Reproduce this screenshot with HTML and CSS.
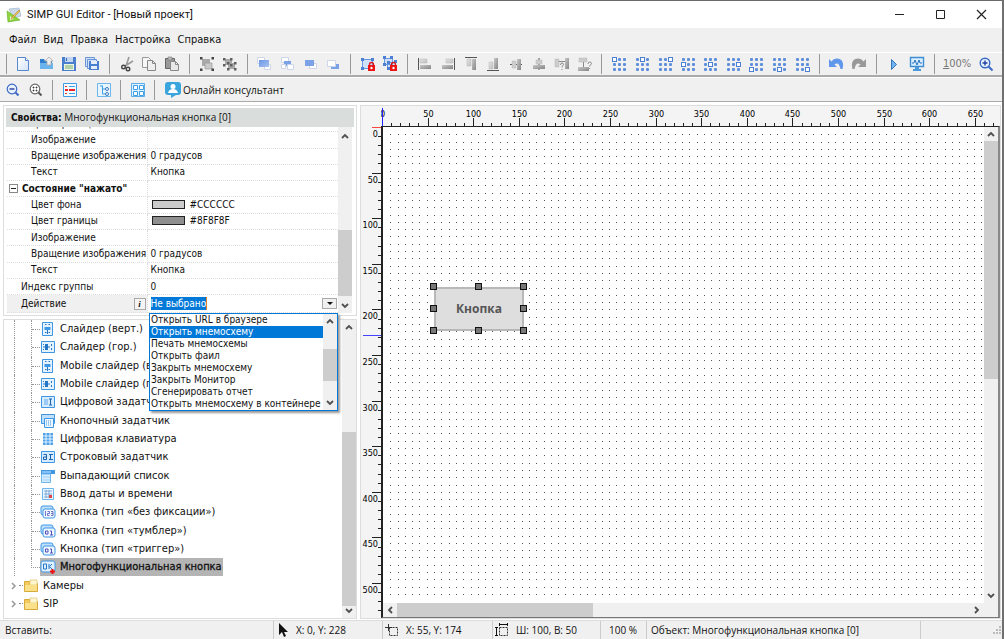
FILE: index.html
```html
<!DOCTYPE html>
<html lang="ru">
<head>
<meta charset="utf-8">
<title>SIMP GUI Editor - [Новый проект]</title>
<link rel="stylesheet" href="styles.css">
</head>
<body>
<svg class="defs" aria-hidden="true">
  <defs>
    <linearGradient id="gray" x1="0" y1="0" x2="1" y2="1"><stop offset="0" stop-color="#c8c8c8"/><stop offset="1" stop-color="#858585"/></linearGradient>
    <linearGradient id="light" x1="0" y1="0" x2="1" y2="1"><stop offset="0" stop-color="#e2e2e2"/><stop offset="1" stop-color="#c0c0c0"/></linearGradient>
    <linearGradient id="blue" x1="0" y1="0" x2="1" y2="1"><stop offset="0" stop-color="#6a95e4"/><stop offset="1" stop-color="#a9c3f2"/></linearGradient>
    <linearGradient id="pale" x1="0" y1="0" x2="1" y2="1"><stop offset="0" stop-color="#fff"/><stop offset="1" stop-color="#d3e2f8"/></linearGradient>
  </defs>
  <symbol id="logo" viewBox="0 0 16 16"><path d="M3 2l10-1 2 8-8 2z" fill="#c9d9ea" stroke="#a3b8cc" stroke-width=".7"/><path d="M1 4l13 9-12 2z" fill="#8ed43c" stroke="#6fb52f" stroke-width=".7"/><path d="M4 9l4 3-4 1z" fill="#eaf8d8"/><path d="M13 3L6 10l-1 2 2-1 7-7z" fill="#f3c44c" stroke="#a07a2c" stroke-width=".5"/></symbol>
  <symbol id="new" viewBox="0 0 16 16"><path d="M2.500 1.500h8l3 3v10h-11z" fill="url(#pale)" stroke="#5588cf"/><path d="M10.500 1.500v3h3" fill="#fff" stroke="#5588cf"/></symbol>
  <symbol id="open" viewBox="0 0 16 16"><path d="M2 3h4l1 2h7v4H2z" fill="#2f7fcc"/><path d="M2 7h13v6H2z" fill="#6ab4ee"/><path d="M11 1l4 4h-2v4H9V5H7z" fill="#eee" stroke="#aaa" stroke-width=".8"/></symbol>
  <symbol id="save" viewBox="0 0 16 16"><path d="M1 1h14v14H1z" fill="#4a7fd0"/><path d="M4 1h8v5H4z" fill="#c3d7f2"/><path d="M3 8h10v6H3z" fill="#eef4e4"/><path d="M4 10h8M4 12h8" stroke="#74b06c"/><path d="M5 2h1v3H5z" fill="#3467b5"/></symbol>
  <symbol id="saveall" viewBox="0 0 16 16"><path d="M1.500 1.500h9v9h-9z" fill="#cfe0f7" stroke="#6a95d8"/><path d="M3.500 3.500h9v9h-9z" fill="#cfe0f7" stroke="#6a95d8"/><path d="M5 5h10v9H5z" fill="#4a7fd0"/><path d="M7 5h6v3H7zM7 10h6v3H7z" fill="#e6eefb"/></symbol>
  <symbol id="cut" viewBox="0 0 16 16"><path d="M10 1L7 10M14 5L6 10" stroke="#999" stroke-width="1.600"/><circle cx="4.500" cy="11" r="1.800" fill="none" stroke="#444" stroke-width="1.400"/><circle cx="9" cy="13" r="1.800" fill="none" stroke="#444" stroke-width="1.400"/></symbol>
  <symbol id="copy" viewBox="0 0 16 16"><path d="M1.500 1.500h6l2 2v8h-8z" fill="#f6f6f6" stroke="#999"/><path d="M6.500 4.500h5l3 3v7h-8z" fill="#eee" stroke="#888"/><path d="M11.500 4.500v3h3" fill="none" stroke="#888"/></symbol>
  <symbol id="paste" viewBox="0 0 16 16"><path d="M1.500 2.500h9v10h-9z" fill="#999" stroke="#666"/><path d="M4 1h4v3H4z" fill="#bbb" stroke="#777" stroke-width=".6"/><path d="M6.500 5.500h5l3 3v6h-8z" fill="#e8e8e8" stroke="#888"/><path d="M11.500 5.500v3h3" fill="none" stroke="#888"/></symbol>
  <symbol id="group" viewBox="0 0 16 16"><path d="M3 3h8v7H3z" fill="#aaa"/><path d="M6 7h7v6H6z" fill="#c9c9c9" stroke="#999" stroke-width=".7"/><path d="M1 1h2.500v2.500H1zM12.500 1H15v2.500h-2.500zM1 12.500h2.500V15H1zM12.500 12.500H15V15h-2.500z" fill="#444"/></symbol>
  <symbol id="ungroup" viewBox="0 0 16 16"><path d="M3 3h7v6H3zM6 7h7v6H6z" fill="#aaa"/><path d="M1 2h2.500v2.500H1zM8 2h2.500v2.500H8zM1 8h2.500v2.500H1zM5 6h2.500v2.500H5zM12 6h2.500v2.500H12zM8 8h2.500v2.500H8zM5 12h2.500v2.500H5zM12 12h2.500v2.500H12z" fill="#606060"/></symbol>
  <symbol id="front" viewBox="0 0 16 16"><path d="M1.500 1.500h7v6h-7zM8.500 8.500h6v5h-6z" fill="#fff" stroke="#ccd6e8"/><path d="M3 4h10v7H3z" fill="url(#blue)"/></symbol>
  <symbol id="forward" viewBox="0 0 16 16"><path d="M2.500 1.500h7v5h-7z" fill="#fff" stroke="#ccd6e8"/><path d="M5 5h7v5H5z" fill="#7ba1e6"/><path d="M8.500 8.500h6v5h-6zM2.500 8.500h4v4h-4z" fill="#fff" stroke="#ccd6e8"/></symbol>
  <symbol id="backward" viewBox="0 0 16 16"><path d="M7.500 7.500h7v5h-7z" fill="#fff" stroke="#ccd6e8"/><path d="M3 4h9v6H3z" fill="#7ba1e6"/></symbol>
  <symbol id="back" viewBox="0 0 16 16"><path d="M6 8h8v5H6z" fill="#7ba1e6"/><path d="M2.500 4.500h8v6h-8z" fill="#fff" stroke="#ccd6e8"/></symbol>
  <symbol id="padlock" viewBox="0 0 16 16"><path d="M9.500 10V8.500a2 2 0 0 1 4 0V10" fill="none" stroke="#d81818" stroke-width="1.300"/><path d="M8 9h7v6H8z" fill="#ec1313"/><circle cx="11.500" cy="12" r="1.200" fill="#fff"/></symbol>
  <symbol id="lock" viewBox="0 0 16 16"><path d="M2.500 3.500h10v9h-10z" fill="#cfe0fa" stroke="#6a98e0"/><path d="M1 2h3v3H1zM11 2h3v3h-3zM1 11h3v3H1z" fill="#4d7fd2"/><use href="#padlock"/></symbol>
  <symbol id="lockall" viewBox="0 0 16 16"><path d="M2.500 2.500h8v6h-8zM5.500 6.500h8v6h-8z" fill="#cfe0fa" stroke="#6a98e0"/><path d="M1 0h3v3H1zM8 0h3v3H8zM1 7h3v3H1zM5 5h3v3H5zM12 4h3v3h-3zM5 11h3v3H5z" fill="#4d7fd2"/><use href="#padlock"/></symbol>
  <symbol id="al1" viewBox="0 0 16 16"><path d="M1.500 2v12" stroke="#555"/><path d="M3 3h7v4H3z" fill="url(#light)" stroke="#bbb" stroke-width=".5"/><path d="M3 9h11v4H3z" fill="url(#gray)"/></symbol>
  <symbol id="al2" viewBox="0 0 16 16"><path d="M14.500 2v12" stroke="#555"/><path d="M6 3h7v4H6z" fill="url(#light)" stroke="#bbb" stroke-width=".5"/><path d="M2 9h11v4H2z" fill="url(#gray)"/></symbol>
  <symbol id="al3" viewBox="0 0 16 16"><path d="M2 1.500h12" stroke="#555"/><path d="M4 3h4v7H4z" fill="url(#light)" stroke="#bbb" stroke-width=".5"/><path d="M9 3h4v11H9z" fill="url(#gray)"/></symbol>
  <symbol id="al4" viewBox="0 0 16 16"><path d="M2 14.500h12" stroke="#555"/><path d="M4 6h4v7H4z" fill="url(#light)" stroke="#bbb" stroke-width=".5"/><path d="M9 2h4v11H9z" fill="url(#gray)"/></symbol>
  <symbol id="al5" viewBox="0 0 16 16"><path d="M2 8.500h12" stroke="#555"/><path d="M4 5h4v7H4z" fill="#ccc" stroke="#bbb" stroke-width=".5"/><path d="M9 3h4v11H9z" fill="url(#gray)"/></symbol>
  <symbol id="al6" viewBox="0 0 16 16"><path d="M8 2v12" stroke="#555"/><path d="M5 4h6v4H5z" fill="#ccc" stroke="#bbb" stroke-width=".5"/><path d="M2 9h12v4H2z" fill="url(#gray)"/></symbol>
  <symbol id="al7" viewBox="0 0 16 16"><path d="M1 3h4v8H1z" fill="#ccc" stroke="#bbb" stroke-width=".5"/><path d="M11 2h4v11h-4z" fill="url(#gray)"/><path d="M5 5.500h6M6.500 9q0-2 1.500-2t1.500 1.500q0 1-1.500 2v1M8 13v1" fill="none" stroke="#888"/></symbol>
  <symbol id="al8" viewBox="0 0 16 16"><path d="M2 2h8v4H2z" fill="#ccc" stroke="#bbb" stroke-width=".5"/><path d="M1 11h11v4H1z" fill="url(#gray)"/><path d="M6.500 6v5M11 8q0-2 1.700-2t1.800 1.500q0 1-1.800 2v1M12.700 12v1" fill="none" stroke="#888"/></symbol>
  <symbol id="undo" viewBox="0 0 16 16"><path d="M1 3v8h8L6.500 8.500Q11 5 12.500 13h2Q17 3 9 2.500 5.500 2.500 3.500 5.500z" fill="#5f97ea"/></symbol>
  <symbol id="redo" viewBox="0 0 16 16"><path d="M15 3v8H7l2.500-2.500Q5 5 3.500 13h-2Q-1 3 7 2.500q3.500 0 5.500 3z" fill="#999"/></symbol>
  <symbol id="play" viewBox="0 0 16 16"><path d="M5.500 3.500v10l5-5z" fill="#6fb4ee" stroke="#3474bd"/></symbol>
  <symbol id="monitor" viewBox="0 0 16 16"><path d="M1.500 1.500h13v9h-13z" fill="#d9efff" stroke="#3f8ed4" stroke-width="1.400"/><path d="M3 7h2l1-3 2 5 2-5 1 3h2" fill="none" stroke="#2c73b8"/><path d="M6 11h4v2h2v2H4v-2h2z" fill="#4b9ade"/></symbol>
  <symbol id="zoomin" viewBox="0 0 16 16"><circle cx="7" cy="7" r="4.800" fill="#e6f0ff" stroke="#3a68c4" stroke-width="1.400"/><path d="M4.500 7h5M7 4.500v5" stroke="#23409a" stroke-width="1.400"/><path d="M10.500 10.500l4 4" stroke="#3a68c4" stroke-width="2"/></symbol>
  <symbol id="zoomout" viewBox="0 0 16 16"><circle cx="7" cy="7" r="4.800" fill="#e6f0ff" stroke="#3a68c4" stroke-width="1.200"/><path d="M4.500 7h5" stroke="#23409a" stroke-width="1.400"/><path d="M10.500 10.500l3 3" stroke="#3a68c4" stroke-width="2"/></symbol>
  <symbol id="fit" viewBox="0 0 16 16"><circle cx="7" cy="7" r="4.800" fill="#fff" stroke="#666" stroke-width="1.200"/><path d="M5 5h1v1H5zM8 5h1v1H8zM5 8h1v1H5zM8 8h1v1H8z" fill="#333" stroke="#333" stroke-width=".7"/><path d="M10.500 10.500l3 3" stroke="#555" stroke-width="2"/></symbol>
  <symbol id="props" viewBox="0 0 16 16"><path d="M1.500 1.500h13v13h-13z" fill="#f4fbff" stroke="#3d9ee5"/><path d="M7 4.500h6M7 11.500h6" stroke="#3d9ee5"/><path d="M3 4.500h2M3 11.500h2" stroke="#d33"/><path d="M3 8h3M7 8h6" stroke="#e22" stroke-width="2"/></symbol>
  <symbol id="treeicon" viewBox="0 0 16 16"><path d="M1.500 1.500h13v13h-13z" fill="#e8f5ff" stroke="#6db7ee"/><path d="M4 4h3M6.500 4v8M6.500 7h3M6.500 12h3" stroke="#3d9ee5" fill="none"/><circle cx="11" cy="7" r="1.500" fill="#fff" stroke="#3278c0"/><circle cx="11" cy="12" r="1.500" fill="#fff" stroke="#3278c0"/></symbol>
  <symbol id="tiles" viewBox="0 0 16 16"><path d="M1.500 1.500h13v13h-13z" fill="#e3f3ff" stroke="#5badec"/><path d="M3.500 3.500h4v4h-4zM9.500 3.500h4v4h-4zM3.500 9.500h4v4h-4zM9.500 9.500h4v4h-4z" fill="#fff" stroke="#3d9ee5"/></symbol>
  <symbol id="chat" viewBox="0 0 16 16"><path d="M3 0h10q3 0 3 3v7q0 3-3 3h-2l-5 3v-3H3q-3 0-3-3V3q0-3 3-3z" fill="#3aa5dc"/><circle cx="8" cy="4.500" r="2.500" fill="#fff"/><path d="M3 11q1-4 5-4t5 4z" fill="#fff"/></symbol>
  <symbol id="sv" viewBox="0 0 16 16"><path d="M2.500 1.500h10v13h-10z" fill="#e4f3ff" stroke="#3f97e4"/><path d="M4.500 6h6v3h-6z" fill="#3f97e4"/><path d="M7.500 9v4M5 3.500h1.500M8.500 3.500H10M5 11.500h1.500M8.500 11.500H10" stroke="#2477c4"/></symbol>
  <symbol id="sh" viewBox="0 0 16 16"><path d="M1.500 2.500h13v11h-13z" fill="#e4f3ff" stroke="#3f97e4"/><path d="M5 5h3v6H5z" fill="#2477c4"/><path d="M3 8h7M11.500 5v2M11.500 9v2M3.500 5v1M3.500 10v1" stroke="#2477c4"/></symbol>
  <symbol id="num" viewBox="0 0 16 16"><path d="M1.500 2.500h13v11h-13z" fill="#d5ebff" stroke="#3f97e4"/><path d="M4 5h4v6H4z" fill="#9bcaf5"/><path d="M10.500 5v6M9 5h3M9 11h3" stroke="#1c62ac"/></symbol>
  <symbol id="btns" viewBox="0 0 16 16"><path d="M1.500 1.500h13v9h-13z" fill="#bfe0fc" stroke="#3f97e4"/><path d="M4.500 5.500h9v9h-9z" fill="#eef7ff" stroke="#3f97e4"/><path d="M6 8h6M6 10h6M6 12h6" stroke="#3f97e4" stroke-dasharray="1 1"/></symbol>
  <symbol id="keys" viewBox="0 0 16 16"><path d="M3 2h10v12H3z" fill="#4a9fea"/><path d="M3 5h10M3 8h10M3 11h10M6 2v12M10 2v12" stroke="#e4f3ff"/></symbol>
  <symbol id="str" viewBox="0 0 16 16"><path d="M1.500 2.500h13v11h-13z" fill="#d5ebff" stroke="#3f97e4"/><path d="M3.500 5.500h3v5h-3V8h3M10.500 5v6M9 5.500h4M9 10.500h4" fill="none" stroke="#1c62ac"/></symbol>
  <symbol id="list" viewBox="0 0 16 16"><path d="M1 2h14v4H1z" fill="#3f97e4"/><path d="M1.500 6h9v8.500h-9z" fill="#d5ebff" stroke="#6db7ee"/><path d="M2 4h9" stroke="#cde7ff"/><path d="M3 9h7M3 12h7" stroke="#9fd0f6"/></symbol>
  <symbol id="date" viewBox="0 0 16 16"><path d="M2.500 2.500h11v11h-11z" fill="#eaf5ff" stroke="#6db7ee"/><path d="M4 5h8M4 8h8M4 11h8M6 4v8M9 4v8" stroke="#6f9dcc" stroke-width=".8"/><path d="M9 9h3v3H9z" fill="#d44"/></symbol>
  <symbol id="b123" viewBox="0 0 16 16"><rect x="1" y="2" width="12" height="9" rx="2" fill="#bfe0fc" stroke="#3f97e4"/><rect x="3" y="5" width="12" height="9" rx="2" fill="#eef7ff" stroke="#3f97e4"/><path d="M5.500 7v5M7.500 7.500h2v2h-2v2h2M11 7.500h2v4h-2M11 9.500h2" fill="none" stroke="#5050b4" stroke-width=".8"/></symbol>
  <symbol id="b01" viewBox="0 0 16 16"><rect x="1" y="2" width="12" height="9" rx="2" fill="#bfe0fc" stroke="#3f97e4"/><rect x="3" y="5" width="12" height="9" rx="2" fill="#eef7ff" stroke="#3f97e4"/><path d="M5.500 8h2.500v3H5.500zM10 8h1.500v4M10 12h3" fill="none" stroke="#5050b4"/></symbol>
  <symbol id="ok" viewBox="0 0 16 16"><rect x="1" y="2" width="14" height="11" rx="2" fill="#dff0ff" stroke="#3f97e4"/><path d="M3.500 5h3v5h-3zM9 5v5M12 5L9.500 7.500 12 10" fill="none" stroke="#2477c4"/><path d="M10 12.500h5M12.500 10v5" stroke="#f01010" stroke-width="2"/></symbol>
  <symbol id="folder" viewBox="0 0 16 16"><path d="M1.500 3.500h5l1 2h7v8h-13z" fill="#f2c95a" stroke="#d9a93a"/><path d="M7 2h7v5H7z" fill="#fff6d0" stroke="#d9b95a" stroke-width=".6"/><path d="M2 7h12v6H2z" fill="#fbe08a"/></symbol>
  <symbol id="up" viewBox="0 0 10 10"><path d="M2 7l3-3 3 3" fill="none" stroke="#505050" stroke-width="1.800"/></symbol>
  <symbol id="down" viewBox="0 0 10 10"><path d="M2 3l3 3 3-3" fill="none" stroke="#505050" stroke-width="1.800"/></symbol>
  <symbol id="left" viewBox="0 0 10 10"><path d="M7 2L4 5l3 3" fill="none" stroke="#505050" stroke-width="1.800"/></symbol>
  <symbol id="right" viewBox="0 0 10 10"><path d="M3 2l3 3-3 3" fill="none" stroke="#505050" stroke-width="1.800"/></symbol>
  <symbol id="expand" viewBox="0 0 10 10"><path d="M3 2l3 3-3 3" fill="none" stroke="#999" stroke-width="1.500"/></symbol>
</svg>

<header class="titlebar">
  <svg class="icon"><use href="#logo"/></svg>
  <h1>SIMP GUI Editor - [Новый проект]</h1>
  <div class="winbtns">
    <button aria-label="Свернуть"><svg viewBox="0 0 11 11"><path d="M1 5.500h9" stroke="#222"/></svg></button>
    <button aria-label="Развернуть"><svg viewBox="0 0 11 11"><path d="M1.500 1.500h8v8h-8z" fill="none" stroke="#222"/></svg></button>
    <button aria-label="Закрыть"><svg viewBox="0 0 11 11"><path d="M1 1l9 9M10 1l-9 9" stroke="#222" stroke-width="1.200"/></svg></button>
  </div>
</header>
<nav class="menu"><button>Файл</button><button>Вид</button><button>Правка</button><button>Настройка</button><button>Справка</button></nav>
<div class="toolbar main-tools" role="toolbar" data-icons="| new open save saveall | cut copy paste | group ungroup | front forward backward back | lock lockall | al1 al2 al3 al4 al5 al6 al7 al8 | g0 g1 g2 g3 g4 g5 g6 g7 g8 | undo redo | play monitor | % zoomin"></div>
<div class="toolbar view-tools" role="toolbar" data-icons="zoomout fit | props | treeicon | tiles | chat"></div>

<main>
  <aside>
    <section class="panel props">
      <h2><b>Свойства:</b> Многофункциональная кнопка [0]</h2>
      <div class="props-body">
        <div class="grid-clip">
          <table>
            <tr><th>Цвет границы</th><td></td></tr>
            <tr><th>Изображение</th><td></td></tr>
            <tr><th>Вращение изображения</th><td>0 градусов</td></tr>
            <tr><th>Текст</th><td>Кнопка</td></tr>
            <tr class="head"><th><i class="minus"></i>Состояние "нажато"</th><td></td></tr>
            <tr><th>Цвет фона</th><td><i class="swatch light"></i>#CCCCCC</td></tr>
            <tr><th>Цвет границы</th><td><i class="swatch dark"></i>#8F8F8F</td></tr>
            <tr><th>Изображение</th><td></td></tr>
            <tr><th>Вращение изображения</th><td>0 градусов</td></tr>
            <tr><th>Текст</th><td>Кнопка</td></tr>
            <tr class="root"><th>Индекс группы</th><td>0</td></tr>
            <tr class="root active"><th><div class="cell"><label for="action">Действие</label><button class="info">i</button></div></th><td><div class="cell"><input id="action" value="Не выбрано" readonly><button class="drop" aria-label="Открыть список"></button></div></td></tr>
          </table>
        </div>
        <div class="vbar props-bar"><svg><use href="#up"/></svg><i class="thumb"></i><svg><use href="#down"/></svg></div>
      </div>
      <div class="popup">
        <ul role="listbox">
          <li role="option">Открыть URL в браузере</li>
          <li role="option" aria-selected="true" class="sel">Открыть мнемосхему</li>
          <li role="option">Печать мнемосхемы</li>
          <li role="option">Открыть фаил</li>
          <li role="option">Закрыть мнемосхему</li>
          <li role="option">Закрыть Монитор</li>
          <li role="option">Сгенерировать отчет</li>
          <li role="option">Открыть мнемосхему в контейнере</li>
        </ul>
        <div class="vbar popup-bar"><svg><use href="#up"/></svg><i class="thumb"></i><svg><use href="#down"/></svg></div>
      </div>
    </section>
    <section class="panel tree">
      <ul>
        <li><span class="trunk"></span><span class="branch"></span><svg class="icon"><use href="#sv"/></svg>Слайдер (верт.)</li>
        <li><span class="trunk"></span><span class="branch"></span><svg class="icon"><use href="#sh"/></svg>Слайдер (гор.)</li>
        <li><span class="trunk"></span><span class="branch"></span><svg class="icon"><use href="#sv"/></svg>Mobile слайдер (верт.)</li>
        <li><span class="trunk"></span><span class="branch"></span><svg class="icon"><use href="#sh"/></svg>Mobile слайдер (гор.)</li>
        <li><span class="trunk"></span><span class="branch"></span><svg class="icon"><use href="#num"/></svg>Цифровой задатчик</li>
        <li><span class="trunk"></span><span class="branch"></span><svg class="icon"><use href="#btns"/></svg>Кнопочный задатчик</li>
        <li><span class="trunk"></span><span class="branch"></span><svg class="icon"><use href="#keys"/></svg>Цифровая клавиатура</li>
        <li><span class="trunk"></span><span class="branch"></span><svg class="icon"><use href="#str"/></svg>Строковый задатчик</li>
        <li><span class="trunk"></span><span class="branch"></span><svg class="icon"><use href="#list"/></svg>Выпадающий список</li>
        <li><span class="trunk"></span><span class="branch"></span><svg class="icon"><use href="#date"/></svg>Ввод даты и времени</li>
        <li><span class="trunk"></span><span class="branch"></span><svg class="icon"><use href="#b123"/></svg>Кнопка (тип «без фиксации»)</li>
        <li><span class="trunk"></span><span class="branch"></span><svg class="icon"><use href="#b01"/></svg>Кнопка (тип «тумблер»)</li>
        <li><span class="trunk"></span><span class="branch"></span><svg class="icon"><use href="#b01"/></svg>Кнопка (тип «триггер»)</li>
        <li><span class="trunk"></span><span class="branch last"></span><span class="chosen"><svg class="icon"><use href="#ok"/></svg>Многофункциональная кнопка</span></li>
        <li class="top"><svg class="chev"><use href="#expand"/></svg><span class="stub"></span><svg class="icon"><use href="#folder"/></svg>Камеры</li>
        <li class="top"><svg class="chev"><use href="#expand"/></svg><span class="stub"></span><svg class="icon"><use href="#folder"/></svg>SIP</li>
      </ul>
      <div class="vbar tree-bar"><svg><use href="#up"/></svg><i class="thumb"></i><svg><use href="#down"/></svg></div>
    </section>
  </aside>

  <section class="workspace">
    <svg class="ruler-x" id="rx"></svg>
    <svg class="ruler-y" id="ry"></svg>
    <div class="view">
      <div class="canvas">
        <svg class="dots" id="dots"></svg>
        <button class="node">Кнопка<i class="h nw"></i><i class="h n"></i><i class="h ne"></i><i class="h w"></i><i class="h e"></i><i class="h sw"></i><i class="h s"></i><i class="h se"></i></button>
      </div>
      <div class="vbar view-v"><svg><use href="#up"/></svg><i class="thumb"></i><svg><use href="#down"/></svg></div>
      <div class="hbar"><svg><use href="#left"/></svg><i class="thumb"></i><svg><use href="#right"/></svg></div>
      <div class="corner"></div>
    </div>
  </section>
</main>

<footer>
  <span class="s1">Вставить:</span>
  <span class="s2"><svg class="icon" viewBox="0 0 16 16"><path d="M5 1v12l3-3 2 5 2-1-2-4h4z" fill="#111"/></svg>X: 0, Y: 228</span>
  <span class="s3"><svg class="icon" viewBox="0 0 16 16"><path d="M1 5.500h7M4.500 2v7" stroke="#333"/><path d="M5.500 5.500h8v8h-8z" fill="none" stroke="#333" stroke-dasharray="2 1"/></svg>X: 55, Y: 174</span>
  <span class="s4"><svg class="icon" viewBox="0 0 16 16"><path d="M5.500 5.500h8v8h-8z" fill="none" stroke="#333" stroke-dasharray="2 1"/><path d="M5 2.500h9M5.500 1v3M13.500 1v3M2.500 5v9M1 5.500h3M1 13.500h3" stroke="#111"/></svg>Ш: 100, В: 50</span>
  <span class="s5">100 %</span>
  <span class="s6">Объект: Многофункциональная кнопка [0]</span>
  <svg class="grip" viewBox="0 0 10 10"><path d="M7 1h2v2H7zM4 4h2v2H4zM7 4h2v2H7zM1 7h2v2H1zM4 7h2v2H4zM7 7h2v2H7z" fill="#bbb"/></svg>
</footer>
<script src="app.js"></script>
</body>
</html>
```
FILE: styles.css
```css
* { box-sizing: border-box; }
body {
  margin: 0;
  height: 100vh;
  display: flex;
  flex-direction: column;
  background: #fff;
  border-top: 1px solid #6a6a6a;
  border-right: 2px solid #707070;
  color: #111;
  font: 10px/16px "DejaVu Sans Condensed", "DejaVu Sans", sans-serif;
  overflow: hidden;
}
button { border: 0; padding: 0; background: none; font: inherit; color: inherit; }
ul { list-style: none; margin: 0; padding: 0; }
svg { display: block; flex: none; }
.defs { position: absolute; width: 0; height: 0; }
.icon { width: 16px; height: 16px; }

.titlebar { height: 27px; flex: none; display: flex; align-items: center; padding-left: 6px; gap: 5px; }
.titlebar h1 { margin: 0; font: 11px/16px Roboto, "Noto Sans", sans-serif; flex: 1; }
.winbtns { display: flex; }
.winbtns button { width: 41px; height: 26px; display: grid; place-items: center; }
.winbtns svg { width: 11px; height: 11px; }

.menu { height: 24px; flex: none; display: flex; align-items: center; gap: 7px; padding-left: 9px; background: #f0f0f0; font-size: 11px; }

.toolbar { flex: none; height: 25px; display: flex; align-items: center; background: #f0f0f0; border-top: 1px solid #fff; border-bottom: 2px solid #aaa; }
.toolbar button { flex: 1 1 22px; max-width: 23px; height: 22px; display: grid; place-items: center; }
.main-tools { padding-right: 5px; }
.view-tools { border-bottom: 1px solid #aaa; padding-left: 1px; }
.sep { flex: 0 0 12px; display: grid; place-items: center; }
.view-tools .sep { flex-basis: 11px; }
.sep::before { content: ""; width: 1px; height: 20px; background: #999; }
.zoom-level { flex: 0 0 34px; text-align: center; color: #777; font-size: 11px; }
.toolbar .labelled { display: flex; align-items: center; gap: 2px; flex: none; max-width: none; padding-left: 5px; font: 10px/16px "Open Sans", "Noto Sans", sans-serif; }

main { flex: 1; min-height: 0; display: flex; gap: 3px; padding: 3px 1px 1px 3px; background: #fff; }
aside { flex: 0 0 354px; display: flex; flex-direction: column; gap: 3px; min-height: 0; }
.panel { border: 1px solid #ddd; background: #fff; position: relative; }
.props { height: 211px; flex: none; padding: 2px; z-index: 1; }
.props h2 { margin: 0; height: 19px; padding-left: 5px; background: #d9dddc; font: 10px/19px "Open Sans", "Noto Sans", sans-serif; }
.props h2 b { font: bold 10px/19px "DejaVu Sans Condensed", sans-serif; }
.props-body { display: flex; height: 186px; padding: 0 2px 0 1px; }
.grid-clip { flex: 1; overflow: hidden; display: flex; flex-direction: column; justify-content: flex-end; }
table { width: 100%; height: 197px; flex: none; border-collapse: collapse; table-layout: fixed; font-size: 10px; line-height: 12px; }
th, td { padding: 0 0 0 3px; text-align: left; font-weight: normal; border-bottom: 1px dotted #ddd; white-space: nowrap; }
th { width: 140px; padding-left: 24px; border-right: 1px dotted #ddd; }
.head th { font-weight: bold; padding-left: 2px; }
.root th { padding-left: 14px; }
.active th { background: #f0f0f0; }
.minus { display: inline-block; width: 9px; height: 9px; margin-right: 4px; border: 1px solid #888; vertical-align: -1px; background: linear-gradient(#222, #222) center / 5px 1px no-repeat; }
.swatch { display: inline-block; width: 33px; height: 9px; margin: 0 5px 0 1px; border: 1px solid #222; vertical-align: -1px; }
.swatch.light { background: #ccc; }
.swatch.dark { background: #8f8f8f; }
.cell { display: flex; align-items: center; justify-content: space-between; padding-right: 1px; }
.info { width: 12px; height: 12px; border: 1px solid #aaa; background: #f4f4f4; font: italic bold 9px/10px "Liberation Serif", serif; }
.cell input { width: 56px; height: 13px; padding: 0; border: 0; border-right: 1px solid #e08030; background: #0078d7; color: #fff; font: inherit; }
.drop { width: 15px; height: 11px; border: 1px solid #aaa; background: #f0f0f0; display: grid; place-items: center; }
.drop::before { content: ""; border: 3px solid transparent; border-top-color: #111; border-bottom: 0; }

.vbar { flex: none; width: 14px; background: #f0f0f0; display: flex; flex-direction: column; align-items: center; }
.vbar svg, .hbar svg { width: 10px; height: 10px; margin: 2px; }
.thumb { background: #cdcdcd; }
.vbar .thumb { width: 100%; }
.vbar svg:last-child, .hbar svg:last-child { margin-top: auto; }
.props-bar svg:first-child { margin-top: 4px; }
.props-bar .thumb { margin-top: 87px; height: 66px; }
.tree-bar .thumb { margin-top: 98px; flex: 1; }
.popup-bar .thumb { margin-top: 21px; height: 32px; }
.view-v .thumb { height: 238px; }

.popup { position: absolute; left: 145px; top: 207px; width: 189px; height: 98px; display: flex; border: 1px solid #0078d7; background: #fff; box-shadow: 2px 2px 2px #999; font-size: 10px; line-height: 12px; }
.popup ul { flex: 1; display: grid; grid-auto-rows: 1fr; }
.popup li { padding-left: 1px; white-space: nowrap; min-height: 0; }
.popup .sel { background: #0078d7; color: #fff; }

.tree { flex: 1; min-height: 0; display: flex; overflow: hidden; }
.tree ul { flex: 1; height: 293px; display: grid; grid-auto-rows: 1fr; font-size: 11px; line-height: 16px; }
.tree li { display: flex; align-items: center; padding-left: 10px; white-space: nowrap; min-height: 0; }
.tree li > .icon { margin-right: 4px; }
.trunk { width: 17px; height: 100%; border-left: 1px dotted #999; }
.branch { width: 9px; height: 100%; border-left: 1px dotted #999; }
.branch::before { content: ""; display: block; height: 50%; border-bottom: 1px dotted #999; }
.branch.last { border-left: 0; }
.branch.last::before { border-left: 1px dotted #999; }
.chosen { display: flex; align-items: center; gap: 4px; height: 18px; padding-right: 1px; background: #b4b4b4; -webkit-text-stroke: 0.3px #111; }
.tree .top { padding-left: 5px; }
.chev { width: 10px; height: 10px; }
.stub { width: 4px; border-top: 1px dotted #888; }

.workspace { flex: 1; min-width: 0; display: grid; grid-template: 20px 1fr / 20px 1fr; background: #f4f4f4; border: 1px solid #ddd; }
.ruler-x { grid-area: 1 / 2; width: 100%; height: 20px; font-size: 9px; }
.ruler-y { grid-area: 2 / 1; width: 20px; height: 100%; font-size: 9px; }
.view { grid-area: 2 / 2; min-width: 0; min-height: 0; display: grid; grid-template: 1fr 14px / 1fr 14px; border: 2px solid #222; border-top-width: 1px; border-right-color: #888; border-bottom: 1px solid #777; background: #fff; }
.canvas { position: relative; overflow: hidden; }
.dots { width: 100%; height: 100%; }
.hbar { display: flex; align-items: center; background: #f0f0f0; }
.hbar .thumb { width: 196px; height: 14px; }
.hbar svg:last-child { margin: 2px 2px 2px auto; }
.corner { background: #f0f0f0; }
.node { position: absolute; left: 51px; top: 160px; width: 90px; height: 44px; box-shadow: inset 0 0 0 2px #b8b8b8; background: #dedede; color: #555; font: bold 12px/16px "Open Sans", "Noto Sans", sans-serif; }
.h { position: absolute; width: 7px; height: 7px; margin: -4px; border: 1px solid #111; background: #777; }
.nw, .n, .ne { top: 0; }
.w, .e { top: 50%; }
.sw, .s, .se { top: 100%; }
.nw, .w, .sw { left: 0; }
.n, .s { left: 50%; }
.ne, .e, .se { left: 100%; }

footer { flex: none; height: 19px; display: flex; align-items: center; background: #f0f0f0; border-top: 1px solid #ddd; font: 10px/18px "Open Sans", "Noto Sans", sans-serif; }
footer span { display: flex; align-items: center; gap: 6px; height: 18px; border-right: 1px solid #ccc; }
.s1 { width: 274px; padding-left: 5px; }
.s2 { width: 109px; }
.s3 { width: 110px; padding-left: 1px; }
.s4 { width: 108px; padding-left: 1px; }
.s5 { width: 46px; padding-left: 8px; }
.s6 { width: 274px; padding-left: 4px; }
.grip { width: 10px; height: 10px; margin-left: auto; }
```
FILE: app.js
```js
const ZOOM = 0.912;

function gridIcon(active) {
  let out = '<svg class="icon" viewBox="0 0 16 16">';
  for (let i = 0; i < 9; i++) {
    const x = 2 + (i % 3) * 5, y = 2 + Math.floor(i / 3) * 5;
    out += i === active
      ? `<rect x="${x - 0.5}" y="${y - 0.5}" width="4" height="4" fill="#fff" stroke="#4d7fd2"/>`
      : `<rect x="${x}" y="${y}" width="3" height="3" rx="1" fill="#5f8fdc"/>`;
  }
  return out + '</svg>';
}

document.querySelectorAll('.toolbar').forEach(bar => {
  bar.innerHTML = bar.dataset.icons.split(' ').map(name => {
    if (name === '|') return '<span class="sep"></span>';
    if (name === '%') return '<span class="zoom-level"><u>1</u>00%</span>';
    if (name === 'chat') return '<button class="labelled"><svg class="icon"><use href="#chat"/></svg>Онлайн консультант</button>';
    if (/^g\d$/.test(name)) return `<button aria-label="${name}">${gridIcon(+name[1])}</button>`;
    return `<button aria-label="${name}"><svg class="icon"><use href="#${name}"/></svg></button>`;
  }).join('');
});

const rx = document.getElementById('rx');
const ry = document.getElementById('ry');
const dots = document.getElementById('dots');

function ruler(length, tick, label) {
  let out = '';
  for (let u = 0; u * ZOOM + 2 < length; u += 10) {
    const p = Math.round(u * ZOOM) + 1.5;
    const major = u % 50 === 0;
    out += tick(p, major);
    if (major && p + 12 < length) out += label(p, u);
  }
  return out;
}

function draw() {
  rx.innerHTML = ruler(rx.getBoundingClientRect().width,
    (p, major) => `<path d="M${p} ${major ? 12 : 17}V20" stroke="#222"/>`,
    (p, u) => `<text x="${p}" y="11" text-anchor="middle">${u}</text>`)
    + '<path d="M1.5 2V20" stroke="#22f"/>';
  ry.innerHTML = ruler(ry.getBoundingClientRect().height,
    (p, major) => `<path d="M${major ? 11 : 17} ${p}H20" stroke="#222"/>`,
    (p, u) => `<text x="17" y="${p + 9}" text-anchor="end">${u}</text>`)
    + '<path d="M11 1.5H20" stroke="#f44"/><path d="M2 209.5H20" stroke="#44f"/>';

  const area = dots.getBoundingClientRect();
  const step = 8 * ZOOM;
  let d = '';
  for (let y = step; y < area.height - 2; y += step)
    for (let x = step; x < area.width; x += step)
      d += `M${Math.round(x)} ${Math.round(y) + 0.5}h1`;
  dots.innerHTML = `<path d="${d}" stroke="#555"/>`;
}

draw();
window.addEventListener('resize', draw);
```
